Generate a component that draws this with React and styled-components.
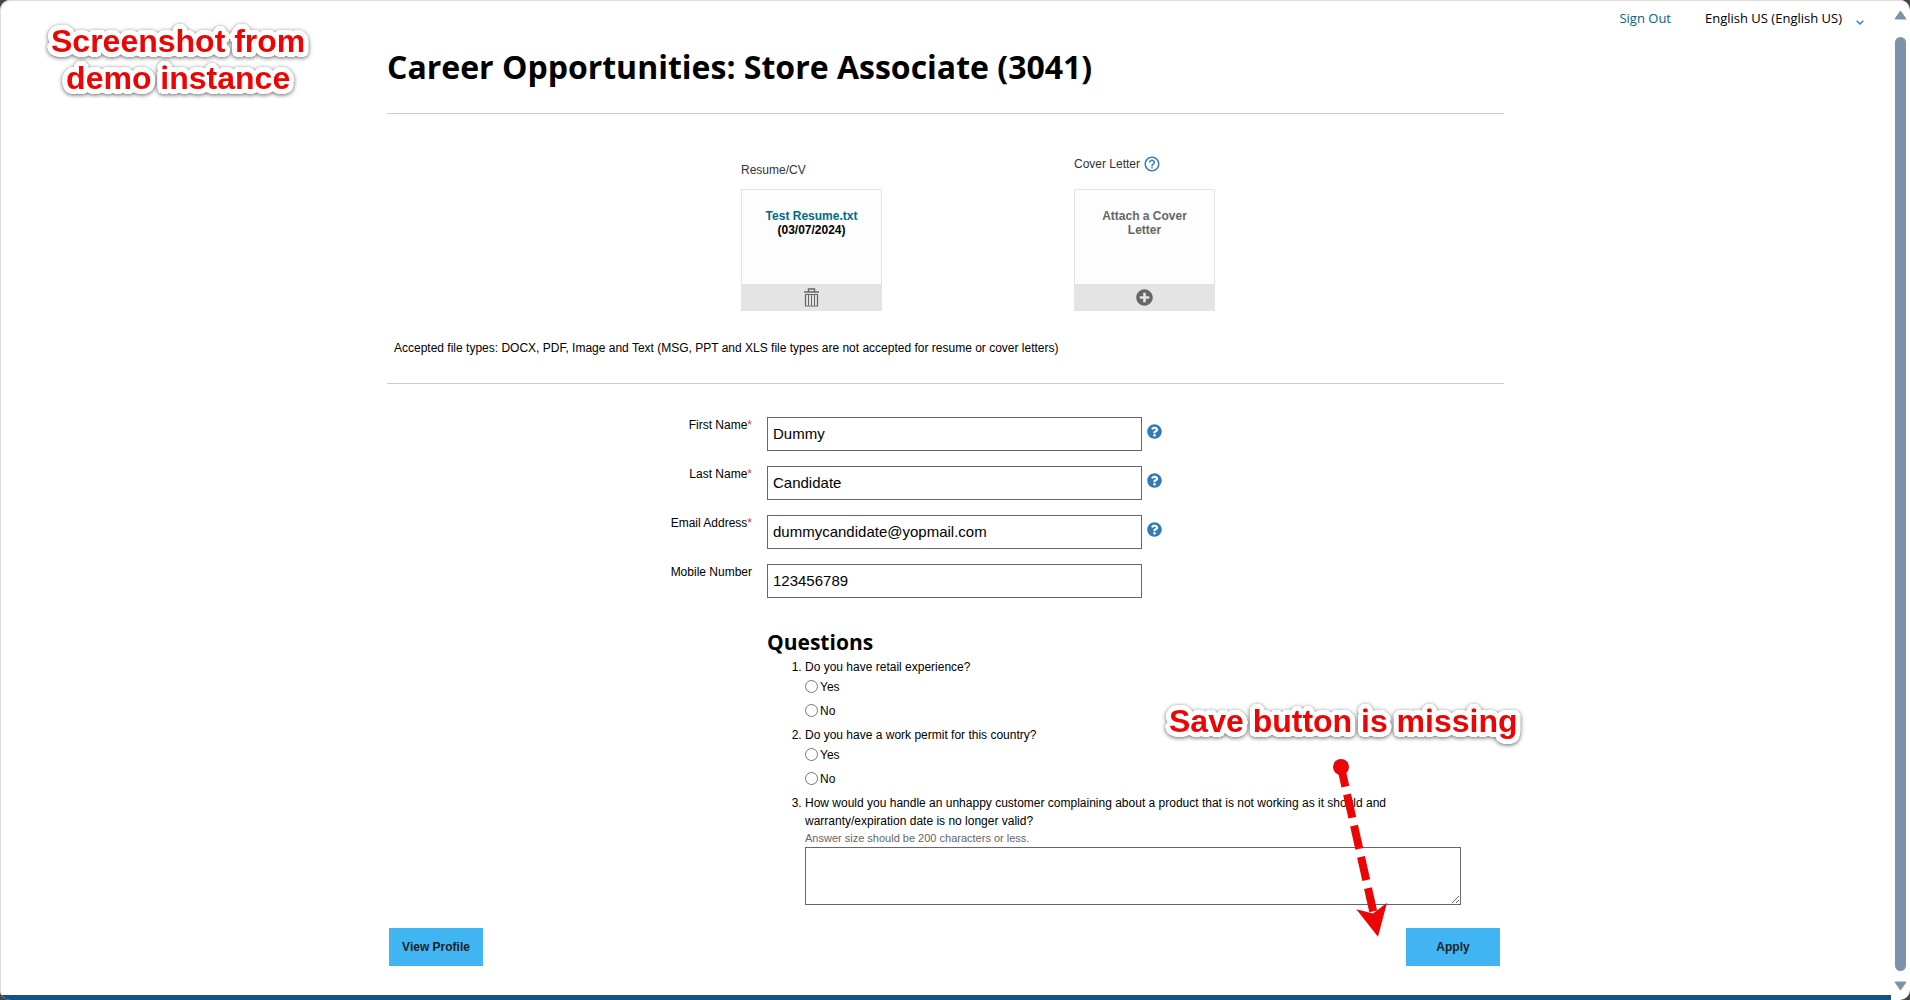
/**
 * Job application page
 * resume / cover letter, contact fields, screening questions
 */

import styled, { createGlobalStyle } from 'styled-components'
import { FaPlusCircle, FaQuestionCircle } from 'react-icons/fa'
import { MdHelpOutline } from 'react-icons/md'

const fields = [
  { id: 'firstName', label: 'First Name', value: 'Dummy', required: true, help: true },
  { id: 'lastName', label: 'Last Name', value: 'Candidate', required: true, help: true },
  { id: 'email', label: 'Email Address', value: 'dummycandidate@yopmail.com', required: true, help: true },
  { id: 'mobile', label: 'Mobile Number', value: '123456789' },
];

const choiceQuestions = [
  { id: 'retail', text: 'Do you have retail experience?' },
  { id: 'permit', text: 'Do you have a work permit for this country?' },
];

const TrashIcon = () => (
  <svg width="17" height="19" viewBox="0 0 17 19" fill="none" stroke="#666" aria-hidden="true">
    <path d="M1 4h15M5.500 3.500v-2.500h6v2.500" strokeWidth="1.4" />
    <path d="M2.500 6.500h12v11.500H2.500z" strokeWidth="1.2" />
    <path d="M5.500 7v10.500M8.500 7v10.500M11.500 7v10.500" strokeWidth="1" />
  </svg>
);

const ArrowNote = () => (
  <ArrowSvg width="70" height="190" viewBox="0 0 70 190" aria-hidden="true">
    <circle cx="16" cy="12" r="8" fill="#eb0505" />
    <path d="M16 12 49 160" stroke="#eb0505" strokeWidth="8" strokeDasharray="24 8" strokeDashoffset="4" />
    <path d="M31.300 154.300 48 158.500 62 147.700 53 181.800z" fill="#eb0505" />
  </ArrowSvg>
);

const App = () => {
  return (
    <Window>
      <GlobalStyle />
      <Page>
        <TopBar>
          <SignOut href="#">Sign Out</SignOut>
          <LanguagePicker>
            <LanguageSelect aria-label="Language">
              <option>English US (English US)</option>
            </LanguageSelect>
            <svg width="8" height="5" viewBox="0 0 8 5" fill="none" stroke="#2a7de1" strokeWidth="1.4">
              <path d="M0.700 0.700 4 4 7.300 0.700" />
            </svg>
          </LanguagePicker>
        </TopBar>

        <Content>
          <Title>Career Opportunities: Store Associate (3041)</Title>

          <Documents>
            <Attachments>
              <Attachment>
                <AttachmentLabel>Resume/CV</AttachmentLabel>
                <Card>
                  <CardBody>
                    <a href="#">Test Resume.txt</a>
                    <span>(03/07/2024)</span>
                  </CardBody>
                  <CardButton type="button" aria-label="Delete resume"><TrashIcon /></CardButton>
                </Card>
              </Attachment>
              <Attachment>
                <AttachmentLabel $raised>
                  Cover Letter <MdHelpOutline size={18} color="#337ab7" />
                </AttachmentLabel>
                <Card>
                  <CardBody $muted>Attach a Cover Letter</CardBody>
                  <CardButton type="button" aria-label="Add cover letter"><FaPlusCircle size={17} /></CardButton>
                </Card>
              </Attachment>
            </Attachments>
            <FileTypes>
              Accepted file types: DOCX, PDF, Image and Text (MSG, PPT and XLS file types are not accepted for resume or cover letters)
            </FileTypes>
          </Documents>

          <Fields>
            {fields.map(field => (
              <FieldRow key={field.id}>
                <label htmlFor={field.id}>
                  {field.label}{field.required && <Required>*</Required>}
                </label>
                <TextInput id={field.id} defaultValue={field.value} />
                {field.help && <FaQuestionCircle size={15} color="#337ab7" />}
              </FieldRow>
            ))}
          </Fields>

          <Questions>
            <h2>Questions</h2>
            <QuestionList>
              {choiceQuestions.map(question => (
                <Question key={question.id}>
                  {question.text}
                  {['Yes', 'No'].map(answer => (
                    <Choice key={answer}>
                      <input type="radio" name={question.id} value={answer} />
                      {answer}
                    </Choice>
                  ))}
                </Question>
              ))}
              <Question>
                <label htmlFor="complaint">
                  How would you handle an unhappy customer complaining about a product that is not working as it should and warranty/expiration date is no longer valid?
                </label>
                <Hint>Answer size should be 200 characters or less.</Hint>
                <AnswerBox id="complaint" />
              </Question>
            </QuestionList>
          </Questions>

          <Actions>
            <ActionButton type="button">View Profile</ActionButton>
            <ActionButton type="button">Apply</ActionButton>
          </Actions>
        </Content>
        <Footer />
      </Page>

      <ScrollBar>
        <svg width="13" height="10" viewBox="0 0 13 10" fill="#7b92aa" stroke="#7b92aa" strokeLinejoin="round">
          <path d="M6.500 1 12 9H1z" />
        </svg>
        <ScrollThumb />
        <svg width="13" height="10" viewBox="0 0 13 10" fill="#7b92aa" stroke="#7b92aa" strokeLinejoin="round">
          <path d="M6.500 9 12 1H1z" />
        </svg>
      </ScrollBar>

      <Note $left={51} $top={23}>Screenshot from<br />demo instance</Note>
      <Note $left={1169} $top={703}>Save button is missing</Note>
      <ArrowNote />
    </Window>
  );
};

export default App;

// white outline around the red note text
const outline = Array.from({ length: 24 }, (_, i) => {
  const angle = (i / 24) * Math.PI * 2;
  return `${(Math.cos(angle) * 5).toFixed(1)}px ${(Math.sin(angle) * 5).toFixed(1)}px 0 #fff`;
}).join(', ');

const GlobalStyle = createGlobalStyle`
  * {
    box-sizing: border-box;
  }

  body {
    margin: 0;
    background: #444;
    color: #000;
    font-family: "Liberation Sans", Arial, sans-serif;
    font-size: 12px;
  }

  a {
    text-decoration: none;
  }

  svg {
    flex-shrink: 0;
  }
`;

const Window = styled.div`
  position: relative;
  display: flex;
  min-height: 100vh;
  background: #fff;
  border-radius: 10px;
  box-shadow: inset 1px 1px 0 #ddd;
  overflow: hidden;
`;

const Page = styled.div`
  flex: 1;
  min-width: 0;
  display: flex;
  flex-direction: column;
`;

const TopBar = styled.header`
  height: 36px;
  display: flex;
  justify-content: flex-end;
  align-items: center;
  gap: 34px;
  padding-right: 27px;
  font-family: "Open Sans", sans-serif;
  font-size: 13px;
`;

const SignOut = styled.a`
  color: #00648c;
`;

const LanguagePicker = styled.div`
  display: flex;
  align-items: center;

  svg {
    margin-top: 8px;
  }
`;

const LanguageSelect = styled.select`
  appearance: none;
  width: 151px;
  border: 0;
  padding: 0;
  background: none;
  color: #000;
  font: inherit;
`;

const Content = styled.main`
  width: 100%;
  max-width: 1117px;
  margin: 0 auto;
`;

const Title = styled.h1`
  margin: 0;
  padding: 11px 0 26px;
  border-bottom: 1px solid #ccc;
  font-family: "Open Sans", sans-serif;
  font-size: 32px;
  line-height: 40px;
`;

const Documents = styled.section`
  padding-top: 42px;
  border-bottom: 1px solid #ccc;
`;

const Attachments = styled.div`
  display: flex;
  gap: 192px;
  padding-left: 354px;
`;

const Attachment = styled.div`
  width: 141px;
`;

const AttachmentLabel = styled.div`
  display: flex;
  align-items: center;
  gap: 3px;
  height: 33px;
  padding-bottom: ${props => (props.$raised ? '17px' : '6px')};
  color: #333;
`;

const Card = styled.div`
  display: flex;
  flex-direction: column;
  height: 122px;
  border: 1px solid #e4e4e4;
  border-bottom: 0;
`;

const CardBody = styled.div`
  flex: 1;
  display: flex;
  flex-direction: column;
  padding: 19px 20px 0;
  background: #fdfdfd;
  color: ${props => (props.$muted ? '#666' : '#000')};
  font-weight: 700;
  line-height: 14px;
  text-align: center;

  a {
    color: #006a8e;
  }
`;

const CardButton = styled.button`
  display: flex;
  justify-content: center;
  align-items: center;
  height: 27px;
  border: 0;
  padding: 0;
  background: #e4e4e4;
  color: #666;
`;

const FileTypes = styled.p`
  margin: 0;
  padding: 29px 7px 27px;
  line-height: 16px;
`;

const Fields = styled.form`
  display: flex;
  flex-direction: column;
  gap: 15px;
  padding-top: 33px;
`;

const FieldRow = styled.div`
  display: flex;
  align-items: flex-start;

  label {
    width: 365px;
    margin-right: 15px;
    line-height: 16px;
    text-align: right;
  }

  svg {
    margin: 7px 0 0 5px;
  }
`;

const Required = styled.span`
  color: #e3342f;
`;

const TextInput = styled.input`
  width: 375px;
  height: 34px;
  border: 1px solid #666;
  padding: 0 5px 2px;
  background: #fff;
  color: #000;
  font-family: inherit;
  font-size: 15px;
`;

const Questions = styled.section`
  padding: 30px 43px 0 380px;

  h2 {
    margin: 0;
    font-family: "Open Sans", sans-serif;
    font-size: 21px;
    line-height: 28px;
  }
`;

const QuestionList = styled.ol`
  margin: 2px 0 0;
  padding: 0 0 0 38px;
`;

const Question = styled.li`
  margin-bottom: 2px;
  line-height: 18px;
`;

const Choice = styled.label`
  display: flex;
  align-items: center;
  gap: 2px;
  height: 24px;
  padding-bottom: 3px;

  input {
    width: 13px;
    height: 13px;
    margin: 0;
  }
`;

const Hint = styled.div`
  padding-bottom: 1px;
  color: #666;
  font-size: 11px;
  line-height: 16px;
`;

const AnswerBox = styled.textarea`
  display: block;
  width: 100%;
  height: 58px;
  border: 1px solid #666;
`;

const Actions = styled.div`
  display: flex;
  justify-content: space-between;
  padding: 21px 4px 28px 2px;
`;

const ActionButton = styled.button`
  width: 94px;
  height: 38px;
  border: 0;
  background: #40b5f2;
  color: #222;
  font-family: inherit;
  font-size: 12px;
  font-weight: 700;
`;

const Footer = styled.footer`
  height: 5px;
  margin-top: auto;
  background: #175082;
`;

const ScrollBar = styled.div`
  width: 19px;
  display: flex;
  flex-direction: column;
  align-items: center;
  padding: 10px 0 9px;
`;

const ScrollThumb = styled.div`
  flex: 1;
  width: 11px;
  margin: 17px 0 10px;
  border-radius: 6px;
  background: #7b92aa;
`;

const Note = styled.div`
  position: absolute;
  left: ${props => props.$left}px;
  top: ${props => props.$top}px;
  color: #eb0505;
  font-size: 32px;
  font-weight: 700;
  line-height: 37px;
  text-align: center;
  white-space: nowrap;
  text-shadow: ${outline};
  filter: drop-shadow(0 1px 2px rgba(0, 0, 0, 0.6));
`;

const ArrowSvg = styled.svg`
  position: absolute;
  left: 1325px;
  top: 755px;
`;
